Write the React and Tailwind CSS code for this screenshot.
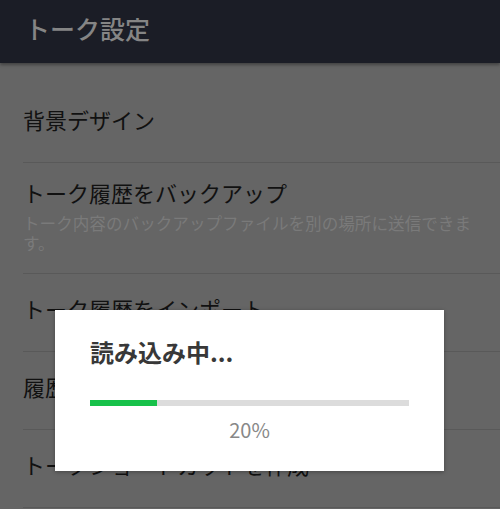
import React from 'react';

const rows = [
  { title: '背景デザイン' },
  {
    title: 'トーク履歴をバックアップ',
    sub: 'トーク内容のバックアップファイルを別の場所に送信できます。',
  },
  { title: 'トーク履歴をインポート' },
  { title: '履歴をすべて削除' },
  { title: 'トークショートカットを作成' },
];

function SettingRow({ title, sub }) {
  if (sub) {
    return (
      <div className="ml-[23px] border-b border-[#595959] pt-[14px] pb-[20px] pr-[20px]">
        <div className="text-[22px] leading-[30px] text-[#111111]">{title}</div>
        <div className="mt-[6px] text-[16.6px] leading-[20px] text-[#7a7a7a]">{sub}</div>
      </div>
    );
  }
  return (
    <div className="ml-[23px] border-b border-[#595959] pt-[19px] pb-[28px]">
      <div className="text-[22px] leading-[30px] text-[#111111]">{title}</div>
    </div>
  );
}

export default function App() {
  return (
    <div
      className="relative w-[500px] h-[509px] overflow-hidden bg-[#656565]"
      style={{ fontFamily: '"Noto Sans CJK JP", "Noto Sans", sans-serif' }}
    >
      <div className="relative z-10 h-[63px] bg-[#1b1d26] pl-[25px] pt-[13px] shadow-[0_2px_3px_rgba(0,0,0,0.35)]">
        <span className="text-[25px] font-medium leading-[30px] text-[#858585]">トーク設定</span>
      </div>

      <div className="pt-[22px]">
        {rows.map(row => (
          <SettingRow key={row.title} title={row.title} sub={row.sub} />
        ))}
      </div>

      <div className="absolute left-[55px] top-[310px] z-20 w-[389px] bg-white px-[35px] pt-[26px] pb-[27px] shadow-[0_1px_4px_rgba(0,0,0,0.3)]">
        <div className="text-[24px] font-bold leading-[32px] text-[#383838]">読み込み中...</div>
        <div className="mt-[32px] h-[6px] w-full bg-[#dcdcdc]">
          <div className="h-full w-[67px] bg-[#17c14a]" />
        </div>
        <div className="mt-[10px] text-center text-[20px] leading-[28px] text-[#888888]">20%</div>
      </div>
    </div>
  );
}
